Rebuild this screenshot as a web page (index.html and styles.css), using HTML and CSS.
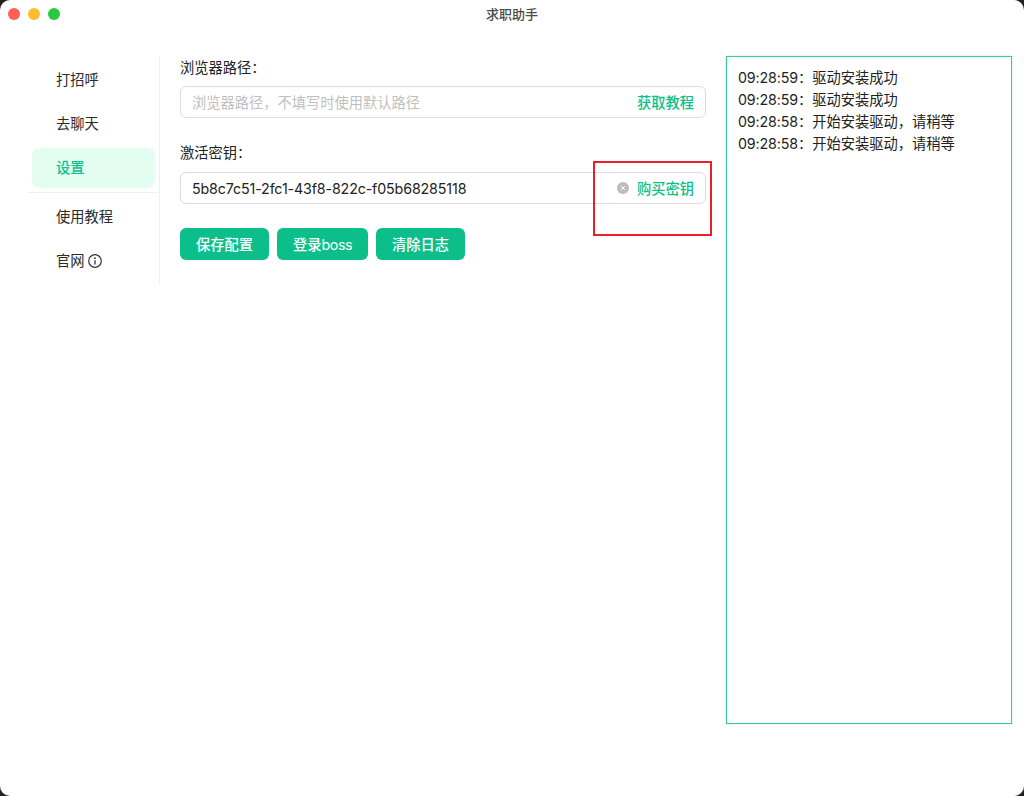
FILE: index.html
```html
<!DOCTYPE html>
<html lang="zh-CN">
<head>
<meta charset="utf-8">
<title>求职助手</title>
<link rel="stylesheet" href="styles.css">
</head>
<body>
<div class="window">
  <header class="titlebar">
    <div class="lights">
      <span class="light red"></span>
      <span class="light yellow"></span>
      <span class="light green"></span>
    </div>
    <div class="title">求职助手</div>
  </header>
  <div class="content">
    <nav class="menu">
      <div class="item">打招呼</div>
      <div class="item">去聊天</div>
      <div class="item active">设置</div>
      <div class="divider"></div>
      <div class="item">使用教程</div>
      <div class="item">官网
        <svg class="info" viewBox="0 0 14 14" width="14" height="14" aria-hidden="true">
          <circle cx="7" cy="7" r="6.3" fill="none" stroke="#333" stroke-width="1.2"/>
          <circle cx="7" cy="4.2" r="0.9" fill="#333"/>
          <path d="M7 6.2v4.4" stroke="#333" stroke-width="1.3" fill="none"/>
        </svg>
      </div>
    </nav>
    <main class="form">
      <label class="label">浏览器路径：</label>
      <div class="input">
        <span class="value placeholder">浏览器路径，不填写时使用默认路径</span>
        <span class="addon">获取教程</span>
      </div>
      <label class="label second">激活密钥：</label>
      <div class="input">
        <span class="value key">5b8c7c51-2fc1-43f8-822c-f05b68285118</span>
        <svg class="clear" viewBox="0 0 12 12" width="12" height="12" aria-hidden="true">
          <circle cx="6" cy="6" r="6" fill="#bdbdbd"/>
          <path d="M4 4l4 4M8 4l-4 4" stroke="#fff" stroke-width="1" fill="none"/>
        </svg>
        <span class="addon">购买密钥</span>
      </div>
      <div class="buttons">
        <button class="btn">保存配置</button>
        <button class="btn">登录<span class="latin">boss</span></button>
        <button class="btn">清除日志</button>
      </div>
    </main>
    <section class="log">
      <div><span class="time">09:28:59</span>：驱动安装成功</div>
      <div><span class="time">09:28:59</span>：驱动安装成功</div>
      <div><span class="time">09:28:58</span>：开始安装驱动，请稍等</div>
      <div><span class="time">09:28:58</span>：开始安装驱动，请稍等</div>
    </section>
  </div>
  <div class="highlight"></div>
</div>
</body>
</html>
```
FILE: styles.css
```css
* { box-sizing: border-box; }
html, body { margin: 0; height: 100%; }
body {
  background: #222;
  overflow: hidden;
  font-family: Inter, "Noto Sans CJK SC", sans-serif;
  font-size: 14.25px;
  color: #222;
}
.window {
  position: relative;
  width: 1024px;
  height: 796px;
  background: #fff;
  border-radius: 10px;
  overflow: hidden;
}
.titlebar {
  position: relative;
  height: 28px;
  display: flex;
  align-items: center;
  justify-content: center;
}
.lights {
  position: absolute;
  left: 8px;
  top: 8px;
  display: flex;
  gap: 8px;
}
.light { width: 12px; height: 12px; border-radius: 50%; }
.red { background: #ff5f57; }
.yellow { background: #febc2e; }
.green { background: #28c840; }
.title { font-size: 13px; font-weight: 500; color: #4a4a4a; margin-top: -2px; }
.content {
  display: flex;
  align-items: flex-start;
  padding: 28px 12px 0 28px;
}
.menu {
  width: 132px;
  flex: none;
  height: 229px;
  padding-top: 4px;
  border-right: 1px solid #f0f0f0;
}
.item {
  height: 40px;
  margin: 0 4px 4px;
  padding-left: 24px;
  border-radius: 8px;
  display: flex;
  align-items: center;
  gap: 3px;
  line-height: 40px;
  color: #2b2b2b;
}
.item.active { background: #e3fdf1; color: #10c08c; font-weight: 500; }
.divider { height: 1px; background: #f0f0f0; margin: 0 0 4px; }
.info { flex: none; }
.form {
  width: 526px;
  flex: none;
  margin-left: 20px;
}
.label {
  display: block;
  height: 22px;
  line-height: 24px;
  margin-bottom: 8px;
}
.label.second { margin-top: 24px; line-height: 22px; }
.input {
  height: 32px;
  border: 1px solid #dcdcdc;
  border-radius: 6px;
  padding: 0 11px;
  display: flex;
  align-items: center;
  gap: 8px;
}
.value { flex: 1; }
.key { letter-spacing: -0.14px; }
.placeholder { color: #bfbfbf; padding-bottom: 2px; }
.addon { color: #0cbf8a; font-weight: 500; padding-bottom: 2px; }
.clear { flex: none; }
.buttons {
  display: flex;
  gap: 8px;
  margin-top: 24px;
}
.btn {
  height: 32px;
  padding: 0 16px 2px;
  border: 0;
  border-radius: 6px;
  background: #0cbf8a;
  color: #fff;
  font: inherit;
  font-weight: 500;
}
.latin { font-weight: 400; letter-spacing: -0.45px; }
.log {
  width: 286px;
  height: 668px;
  flex: none;
  margin-left: 20px;
  border: 1px solid #35cc9c;
  box-shadow: 0 0 1px rgba(53, 204, 156, 0.6);
  padding: 10px 11px;
  line-height: 22px;
}
.time { letter-spacing: -0.14px; }
.highlight {
  position: absolute;
  left: 593px;
  top: 161px;
  width: 119px;
  height: 75px;
  border: 2px solid #e8202a;
}
```
